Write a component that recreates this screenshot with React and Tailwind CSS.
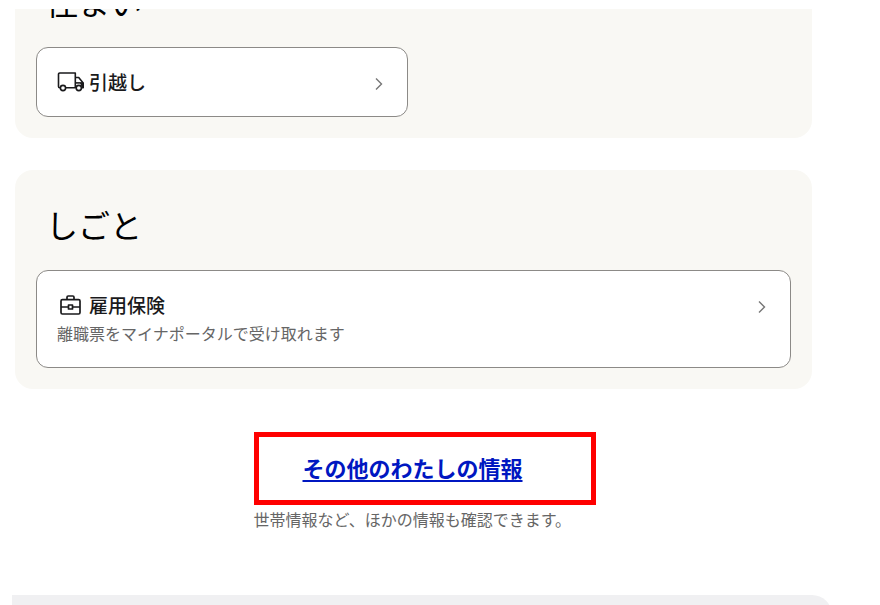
function TruckIcon() {
  return (
    <svg aria-hidden="true" width="28" height="28" viewBox="0 0 28 28" fill="none" stroke="#1a1a1c" strokeWidth="1.6">
      <path d="M3.6 19.8H2.7a1.2 1.2 0 0 1-1.2-1.2V6.2a1.2 1.2 0 0 1 1.2-1.2h15.6v14.8H8.4" strokeLinejoin="round" />
      <path d="M18.3 9.5h3.4l4.5 5.4v4.9h-1.4" strokeLinejoin="round" />
      <path d="M18.3 14.9h7.9" />
      <path d="M23 15h3.4v4.3h-1.6z" fill="#1a1a1c" stroke="none" />
      <circle cx="6" cy="20" r="2.6" fill="#fff" />
      <circle cx="21.8" cy="20" r="2.6" fill="#fff" />
    </svg>
  );
}

function BriefcaseIcon() {
  return (
    <svg aria-hidden="true" width="28" height="28" viewBox="0 0 28 28" fill="none" stroke="#1a1a1c" strokeWidth="1.7" strokeLinejoin="round">
      <rect x="4" y="8.6" width="19" height="14.4" rx="1.4" />
      <path d="M10 8.6V6.2a1.2 1.2 0 0 1 1.2-1.2h4.6A1.2 1.2 0 0 1 17 6.2v2.4" />
      <path d="M4 16h7.5M15.5 16H23" />
      <rect x="11.5" y="14" width="4" height="4" />
    </svg>
  );
}

function ChevronIcon() {
  return (
    <svg aria-hidden="true" width="8" height="14" viewBox="0 0 8 14" fill="none" stroke="#767676" strokeWidth="1.4" className="shrink-0">
      <path d="M1 1.5 6.5 7 1 12.5" />
    </svg>
  );
}

function Card({ icon, title, description, className = "" }) {
  return (
    <a
      href="#"
      className={`flex items-start justify-between rounded-xl border border-[#8c8a87] bg-white px-5 text-[#1a1a1c] ${className}`}
    >
      <span className="block">
        <span className="flex items-center gap-1 text-[19px] leading-7 font-medium">
          {icon}
          {title}
        </span>
        {description ? <span className="block text-base leading-7 text-[#666]">{description}</span> : null}
      </span>
      <span className="flex h-8 items-center pr-1">
        <ChevronIcon />
      </span>
    </a>
  );
}

function Section({ title, children, className = "" }) {
  return (
    <section className={`rounded-[18px] bg-[#f9f8f4] px-[21px] pt-7 pb-[21px] ${className}`}>
      <h2 className="px-[10px] text-[32px] leading-[52px] text-black">{title}</h2>
      <div className="mt-5 grid grid-cols-2 gap-[11px]">{children}</div>
    </section>
  );
}

function App() {
  return (
    <div
      lang="ja"
      className="h-screen overflow-hidden bg-white pt-[9px] font-['Noto_Sans_CJK_JP',sans-serif]"
    >
      <main className="overflow-hidden pr-[68px] pl-[15px]">
        <Section title="住まい" className="-mt-[62px]">
          <Card icon={<TruckIcon />} title="引越し" className="pt-5 pb-4" />
        </Section>

        <Section title="しごと" className="mt-8">
          <Card
            icon={<BriefcaseIcon />}
            title="雇用保険"
            description="離職票をマイナポータルで受け取れます"
            className="col-span-2 pt-5 pb-5"
          />
        </Section>

        <div className="mx-auto mt-[43px] w-80">
          <div className="w-[342px] border-[5px] border-[#ff0000] px-11 pt-[15px] pb-[17px]">
            <a
              href="#"
              className="block text-[22px] leading-[31px] font-bold whitespace-nowrap text-[#0017c1] underline decoration-2 underline-offset-3"
            >
              その他のわたしの情報
            </a>
          </div>
          <p className="text-base leading-7 whitespace-nowrap text-[#666]">世帯情報など、ほかの情報も確認できます。</p>
        </div>
      </main>

      <footer className="mt-[62px] mr-12 ml-3 h-20 rounded-tr-[20px] bg-[#f0f0f2]" />
    </div>
  );
}

export default App;
